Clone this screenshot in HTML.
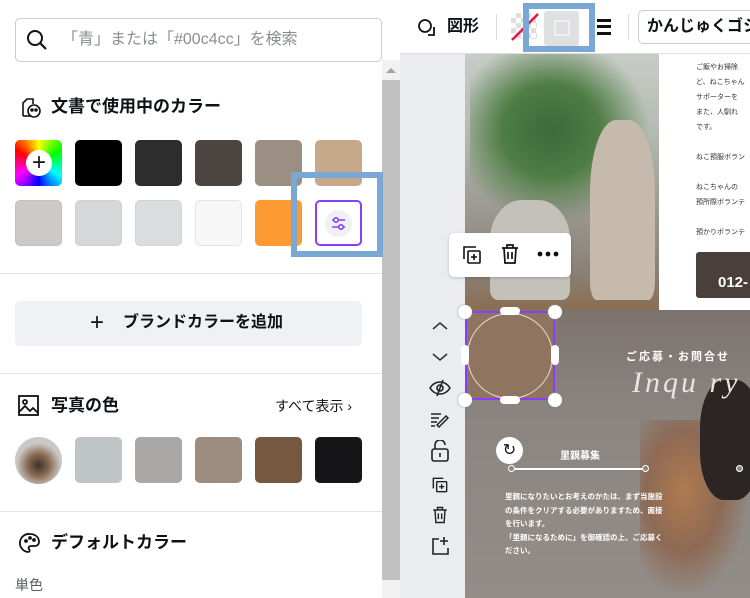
<!DOCTYPE html>
<html><head><meta charset="utf-8"><style>
*{box-sizing:border-box;margin:0;padding:0}
body{width:750px;height:598px;overflow:hidden;position:relative;background:#fff;font-family:"Liberation Sans","Noto Sans CJK JP",sans-serif;color:#0d1216}
.a{position:absolute}
.sw{position:absolute;width:47px;height:46px;border-radius:5px}
.h{position:absolute;font-size:17px;font-weight:bold;line-height:20px}
.sep{position:absolute;left:0;width:382px;height:1px;background:#e2e3e6}
</style></head><body>
<!-- left panel -->
<div class="a" style="left:15px;top:18px;width:367px;height:44px;border:1px solid #c9cbd0;border-radius:5px"></div>
<svg class="a" style="left:26px;top:29px" width="22" height="22" viewBox="0 0 22 22"><circle cx="9" cy="9" r="7" fill="none" stroke="#111" stroke-width="2"/><path d="M14 14l6 6" stroke="#111" stroke-width="2.2"/></svg>
<div class="a" style="left:62px;top:30px;font-size:16px;line-height:20px;color:#8a8d92">「青」または「#00c4cc」を検索</div>
<div class="a" style="left:382px;top:60px;width:18px;height:538px;background:#f1f1f1"></div>
<div class="a" style="left:382px;top:80px;width:18px;height:500px;background:#c1c1c1"></div>
<div class="a" style="left:386px;top:68px;width:0;height:0;border-left:5px solid transparent;border-right:5px solid transparent;border-bottom:5px solid #a3a3a3"></div>
<svg class="a" style="left:18px;top:96px" width="24" height="24" viewBox="0 0 24 24" fill="none" stroke="#111" stroke-width="1.6"><path d="M5 20V7l4-4h6v5"/><path d="M5 20h8"/><circle cx="16" cy="15" r="6"/><circle cx="14" cy="14" r="1" fill="#111"/><circle cx="18" cy="14" r="1" fill="#111"/></svg>
<div class="h" style="left:51px;top:97px">文書で使用中のカラー</div>
<div class="sw" style="left:15px;top:140px;background:conic-gradient(from 0deg,#ff0,#0f0,#0ff,#00f,#f0f,#f00,#ff0);"></div>
<div class="a" style="left:26px;top:150px;width:26px;height:26px;border-radius:50%;background:#fff;font-size:24px;line-height:25px;text-align:center">+</div>
<div class="sw" style="left:75px;top:140px;background:#000"></div>
<div class="sw" style="left:135px;top:140px;background:#2d2d2d"></div>
<div class="sw" style="left:195px;top:140px;background:#4d4540"></div>
<div class="sw" style="left:255px;top:140px;background:#9b8f84"></div>
<div class="sw" style="left:315px;top:140px;background:#c6a98b"></div>
<div class="sw" style="left:15px;top:200px;background:#cdc9c7;border:1px solid #c4c0be"></div>
<div class="sw" style="left:75px;top:200px;background:#d6d7d8;border:1px solid #cfd0d1"></div>
<div class="sw" style="left:135px;top:200px;background:#dadddd;border:1px solid #d2d5d5"></div>
<div class="sw" style="left:195px;top:200px;background:#f7f7f7;border:1px solid #e4e4e4"></div>
<div class="sw" style="left:255px;top:200px;background:#fd9a32"></div>
<div class="a" style="left:291px;top:172px;width:92px;height:85px;border:6px solid #7aa7d4"></div>
<div class="sw" style="left:315px;top:200px;background:#fff;border:2px solid #8b3dff"></div>
<div class="a" style="left:325px;top:210px;width:27px;height:27px;border-radius:50%;background:#f1f1f3"></div>
<svg class="a" style="left:329px;top:214px" width="19" height="19" viewBox="0 0 19 19" fill="none" stroke="#8b3dff" stroke-width="1.6"><path d="M3 6h13M3 13h13"/><circle cx="7" cy="6" r="2.2" fill="#fff"/><circle cx="12" cy="13" r="2.2" fill="#fff"/></svg>
<div class="sep" style="top:273px"></div>
<div class="a" style="left:15px;top:301px;width:347px;height:45px;background:#f0f1f4;border-radius:5px"></div>
<div class="a" style="left:90px;top:309px;font-size:24px;line-height:28px;font-weight:300">+</div>
<div class="a" style="left:123px;top:313px;font-size:16px;line-height:20px;font-weight:bold">ブランドカラーを追加</div>
<div class="sep" style="top:373px"></div>
<svg class="a" style="left:18px;top:395px" width="22" height="22" viewBox="0 0 22 22" fill="none" stroke="#111" stroke-width="1.8"><rect x="1" y="1" width="19" height="19"/><circle cx="7" cy="7" r="2"/><path d="M1 17l6-6 5 5 3-3 5 5"/></svg>
<div class="h" style="left:51px;top:396px">写真の色</div>
<div class="a" style="left:275px;top:397px;font-size:14px;line-height:18px">すべて表示 ›</div>
<div class="a" style="left:15px;top:437px;width:47px;height:47px;border-radius:50%;background:radial-gradient(circle at 50% 60%,#3a3230 0,#8a6a50 30%,#c9c8c6 60%)"></div>
<div class="sw" style="left:75px;top:437px;background:#bfc5c7"></div>
<div class="sw" style="left:135px;top:437px;background:#a9a8a6"></div>
<div class="sw" style="left:195px;top:437px;background:#9c8d80"></div>
<div class="sw" style="left:255px;top:437px;background:#765840"></div>
<div class="sw" style="left:315px;top:437px;background:#161518"></div>
<div class="sep" style="top:511px"></div>
<svg class="a" style="left:19px;top:532px" width="22" height="22" viewBox="0 0 22 22" fill="none" stroke="#111" stroke-width="1.8"><path d="M11 2a9 9 0 0 0-2 18c2 0 2-2 1-3s0-3 2-3h4a4 4 0 0 0 4-4c0-5-4-8-9-8z"/><circle cx="7" cy="9" r="1" fill="#111"/><circle cx="11" cy="6" r="1" fill="#111"/><circle cx="15" cy="8" r="1" fill="#111"/></svg>
<div class="h" style="left:51px;top:533px">デフォルトカラー</div>
<div class="a" style="left:15px;top:576px;font-size:14px;line-height:18px;color:#5a5d62">単色</div>
<!-- canvas -->
<div class="a" style="left:400px;top:54px;width:350px;height:544px;background:#ebecf0"></div>
<div class="a" style="left:400px;top:0;width:350px;height:54px;background:#fff;border-bottom:1px solid #dcdde0"></div>
<svg class="a" style="left:417px;top:17px" width="24" height="22" viewBox="0 0 24 22" fill="none" stroke="#111" stroke-width="1.8"><circle cx="8" cy="9" r="6"/><path d="M17 10v8h-6"/></svg>
<div class="a" style="left:447px;top:17px;font-size:16px;line-height:20px;font-weight:bold">図形</div>
<div class="a" style="left:496px;top:14px;width:1px;height:26px;background:#dcdde0"></div>
<div class="a" style="left:511px;top:13px;width:26px;height:26px;background:repeating-conic-gradient(#ddd 0 25%,#fff 0 50%) 0 0/10px 10px"></div>
<svg class="a" style="left:510px;top:12px" width="30" height="30"><path d="M2 28L28 2" stroke="#e5173f" stroke-width="2.5"/></svg>
<div class="a" style="left:544px;top:11px;width:35px;height:35px;background:#dfe0e2;border-radius:3px"></div>
<div class="a" style="left:554px;top:20px;width:16px;height:16px;background:#dfe0e2;border:2px solid #f0f0f0"></div>
<div class="a" style="left:523px;top:3px;width:72px;height:49px;border:6px solid #7aa7d4"></div>
<div class="a" style="left:597px;top:19px;width:14px;height:16px;border-top:3px solid #111;border-bottom:3px solid #111"></div>
<div class="a" style="left:597px;top:25px;width:14px;height:3px;background:#111"></div>
<div class="a" style="left:628px;top:14px;width:1px;height:26px;background:#dcdde0"></div>
<div class="a" style="left:638px;top:10px;width:130px;height:34px;border:1px solid #c9cbd0;border-radius:5px;padding:6px 8px;font-size:16px;line-height:20px;font-weight:bold;white-space:nowrap">かんじゅくゴシ</div>
<!-- pages -->
<div class="a" style="left:465px;top:54px;width:194px;height:256px;background:linear-gradient(180deg,#c8ccc7 0,#b4bbb1 30%,#9c9a92 60%,#8a8176 85%,#8a6d52 100%)"></div>
<div class="a" style="left:470px;top:54px;width:180px;height:170px;background:radial-gradient(ellipse at 45% 45%,#3c6a3a 0,#4f7d45 35%,transparent 70%)"></div>
<div class="a" style="left:490px;top:200px;width:80px;height:100px;border-radius:40% 40% 10% 10%;background:#c4c1bb"></div>
<div class="a" style="left:590px;top:120px;width:65px;height:180px;border-radius:40% 40% 10% 10%;background:#c6baac"></div>
<div class="a" style="left:659px;top:54px;width:91px;height:256px;background:#fff"></div>
<div class="a" style="left:696px;top:60px;font-size:7px;line-height:15px;color:#333;white-space:nowrap;overflow:hidden;width:54px">ご飯やお掃除<br>ど、ねこちゃん<br>サポーターを<br>また、人馴れ<br>です。<br><br>ねこ預服ボラン<br><br>ねこちゃんの<br>預所際ボランテ<br><br>預かりボランテ<br><br>保護ねこの飼<br>ている方が対象</div>
<div class="a" style="left:696px;top:252px;width:60px;height:46px;background:#4a3f3a;border-radius:3px;color:#fff;font-weight:bold;font-size:15px;padding:22px 0 0 22px">012-</div>
<div class="a" style="left:465px;top:310px;width:285px;height:288px;background:linear-gradient(180deg,#7d736d 0,#8c8682 40%,#938d88 100%)"></div>
<div class="a" style="left:640px;top:420px;width:110px;height:178px;background:radial-gradient(ellipse at 40% 40%,#b07a4f 0,#8d6a55 40%,transparent 70%)"></div>
<div class="a" style="left:700px;top:380px;width:60px;height:120px;background:#2b2523;border-radius:40%"></div>
<div class="a" style="left:626px;top:348px;font-size:11px;color:#fff;font-weight:bold;letter-spacing:2px">ご応募・お問合せ</div>
<div class="a" style="left:632px;top:366px;font-size:30px;color:#e6e6e6;font-family:'Liberation Serif',serif;font-style:italic;font-weight:100;letter-spacing:3px">Inqu ry</div>
<div class="a" style="left:496px;top:437px;width:27px;height:27px;border-radius:50%;background:#fff;font-size:16px;text-align:center;line-height:27px">↻</div>
<div class="a" style="left:560px;top:447px;font-size:10px;color:#fff;font-weight:bold">里親募集</div>
<div class="a" style="left:511px;top:468px;width:135px;height:2px;background:#fff"></div>
<div class="a" style="left:508px;top:465px;width:7px;height:7px;border-radius:50%;border:1px solid #fff;background:#888"></div>
<div class="a" style="left:642px;top:465px;width:7px;height:7px;border-radius:50%;border:1px solid #fff;background:#888"></div>
<div class="a" style="left:736px;top:465px;width:7px;height:7px;border-radius:50%;border:1px solid #fff;background:#888"></div>
<div class="a" style="left:505px;top:490px;font-size:7.5px;line-height:13.5px;color:#fff;font-weight:bold;white-space:nowrap">里親になりたいとお考えのかたは、まず当施設<br>の条件をクリアする必要がありますため、面接<br>を行います。<br>「里親になるために」を御確認の上、ご応募く<br>ださい。</div>
<!-- selection -->
<div class="a" style="left:465px;top:311px;width:90px;height:89px;background:#8f7560"></div>
<div class="a" style="left:467px;top:313px;width:86px;height:86px;border-radius:50%;border:1px solid #e8ddd0"></div>
<div class="a" style="left:465px;top:311px;width:90px;height:89px;border:2px solid #8b3dff"></div>
<div class="a" style="left:458px;top:305px;width:14px;height:14px;border-radius:50%;background:#fff;box-shadow:0 0 2px #888"></div>
<div class="a" style="left:548px;top:305px;width:14px;height:14px;border-radius:50%;background:#fff;box-shadow:0 0 2px #888"></div>
<div class="a" style="left:458px;top:393px;width:14px;height:14px;border-radius:50%;background:#fff;box-shadow:0 0 2px #888"></div>
<div class="a" style="left:548px;top:393px;width:14px;height:14px;border-radius:50%;background:#fff;box-shadow:0 0 2px #888"></div>
<div class="a" style="left:500px;top:307px;width:20px;height:8px;border-radius:4px;background:#fff"></div>
<div class="a" style="left:500px;top:396px;width:20px;height:8px;border-radius:4px;background:#fff"></div>
<div class="a" style="left:461px;top:345px;width:8px;height:20px;border-radius:4px;background:#fff"></div>
<div class="a" style="left:551px;top:345px;width:8px;height:20px;border-radius:4px;background:#fff"></div>
<!-- floating menu -->
<div class="a" style="left:449px;top:233px;width:122px;height:44px;background:#fff;border-radius:5px;box-shadow:0 1px 3px rgba(0,0,0,.2)"></div>
<svg class="a" style="left:460px;top:243px" width="24" height="24" viewBox="0 0 24 24" fill="none" stroke="#111" stroke-width="1.6"><path d="M4 16V4h12"/><rect x="8" y="8" width="12" height="12" rx="1"/><path d="M14 11v6M11 14h6"/></svg>
<svg class="a" style="left:498px;top:242px" width="24" height="24" viewBox="0 0 24 24" fill="none" stroke="#111" stroke-width="1.7"><path d="M4 6h16M9 6V3h6v3M6 6l1 15h10l1-15M10 10v7M14 10v7"/></svg>
<svg class="a" style="left:537px;top:250px" width="22" height="8"><circle cx="3" cy="4" r="2.4" fill="#111"/><circle cx="11" cy="4" r="2.4" fill="#111"/><circle cx="19" cy="4" r="2.4" fill="#111"/></svg>
<!-- side tools -->
<svg class="a" style="left:432px;top:321px" width="16" height="10" fill="none" stroke="#333" stroke-width="1.6"><path d="M1 8l7-6 7 6"/></svg>
<svg class="a" style="left:432px;top:352px" width="16" height="10" fill="none" stroke="#333" stroke-width="1.6"><path d="M1 2l7 6 7-6"/></svg>
<svg class="a" style="left:429px;top:378px" width="22" height="20" viewBox="0 0 22 20" fill="none" stroke="#222" stroke-width="1.6"><path d="M1 10c5-8 15-8 20 0-5 8-15 8-20 0z"/><circle cx="11" cy="10" r="3"/><path d="M14 2L8 18"/></svg>
<svg class="a" style="left:430px;top:410px" width="20" height="20" viewBox="0 0 20 20" fill="none" stroke="#222" stroke-width="1.5"><path d="M1 4h10M1 8h8M1 12h6M1 16h4M9 17l9-9-2-2-9 9z"/></svg>
<svg class="a" style="left:431px;top:440px" width="18" height="22" viewBox="0 0 18 22" fill="none" stroke="#222" stroke-width="1.6"><path d="M4 9V5a5 5 0 0 1 10 0"/><rect x="1" y="9" width="16" height="12" rx="2"/><path d="M9 13v4"/></svg>
<svg class="a" style="left:430px;top:475px" width="20" height="20" viewBox="0 0 24 24" fill="none" stroke="#222" stroke-width="1.7"><path d="M4 16V4h12"/><rect x="8" y="8" width="12" height="12" rx="1"/><path d="M14 11v6M11 14h6"/></svg>
<svg class="a" style="left:430px;top:505px" width="20" height="20" viewBox="0 0 24 24" fill="none" stroke="#222" stroke-width="1.7"><path d="M4 6h16M9 6V3h6v3M6 6l1 15h10l1-15M10 10v7M14 10v7"/></svg>
<svg class="a" style="left:431px;top:536px" width="20" height="20" viewBox="0 0 20 20" fill="none" stroke="#222" stroke-width="1.6"><path d="M8 3H2v15h15v-6M13 1v8M9 5h8"/></svg>
</body></html>
